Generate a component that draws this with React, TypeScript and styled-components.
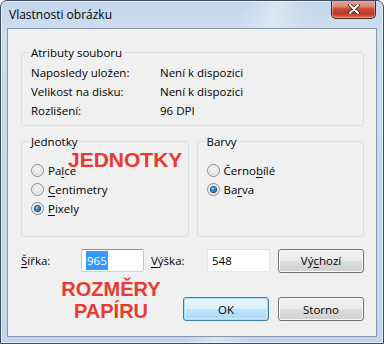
import React from "react";
import styled, { createGlobalStyle, css } from "styled-components";

const Global = createGlobalStyle`
  html, body { margin: 0; padding: 0; }
  body { background: #ffffff; font-family: "Open Sans", "Noto Sans", sans-serif; }
  * { box-sizing: border-box; }
`;

const UI_FONT = `"Open Sans", "Noto Sans", sans-serif`;

const Window = styled.div`
  width: 384px;
  height: 344px;
  border: 1px solid #3f4d5c;
  border-radius: 7px 7px 0 0;
  background:
    linear-gradient(100deg, rgba(255,255,255,0) 55%, rgba(255,255,255,0.35) 62%, rgba(255,255,255,0) 70%),
    linear-gradient(180deg, #c3d6ec 0%, #cfdff1 10%, #c6d9ee 30%, #c2d5eb 100%);
  box-shadow: inset 0 0 0 1px rgba(255,255,255,0.55);
  display: flex;
  flex-direction: column;
  overflow: hidden;
  font-family: ${UI_FONT};
  font-size: 11.5px;
  color: #000;
`;

const TitleBar = styled.div`
  height: 27px;
  display: flex;
  align-items: flex-start;
  justify-content: space-between;
  padding-left: 8px;
  padding-right: 7px;
`;

const Title = styled.div`
  line-height: 28px;
  font-size: 12px;
  color: #000;
`;

const CloseButton = styled.button`
  width: 45px;
  height: 19px;
  margin-top: -1px;
  padding: 0;
  border: 1px solid #4a2620;
  border-top: none;
  border-radius: 0 0 5px 5px;
  background: linear-gradient(180deg, #e7a898 0%, #dd8a78 35%, #c64a35 50%, #c0392a 75%, #d8694c 100%);
  box-shadow: inset 0 0 0 1px rgba(255, 210, 200, 0.45);
  display: flex;
  align-items: center;
  justify-content: center;
`;

const Body = styled.div`
  flex: 1;
  display: flex;
  padding: 0 7px 6px 6px;
`;

const Client = styled.div`
  flex: 1;
  position: relative;
  border: 1px solid #8496aa;
  background: #f0f0f0;
  padding: 16px 12px 0 13px;
  display: flex;
  flex-direction: column;
`;

const Group = styled.fieldset<{ $h: number; $grow?: boolean }>`
  margin: 0;
  height: ${(p) => p.$h}px;
  flex: ${(p) => (p.$grow ? "1 1 0" : "none")};
  border: 1px solid #d5dfe5;
  border-radius: 3px;
  padding: 0 9px 0 9px;
  min-width: 0;
`;

const Legend = styled.legend`
  padding: 0 2px;
  margin-left: -2px;
  line-height: 15px;
  font-size: 11.5px;
`;

const InfoGrid = styled.div`
  display: grid;
  grid-template-columns: 129px 1fr;
  grid-auto-rows: 19px;
  align-items: center;
  padding-top: 3px;
`;

const GroupsRow = styled.div`
  display: flex;
  gap: 8px;
  margin-top: 8px;
`;

const RadioList = styled.div`
  display: flex;
  flex-direction: column;
  padding-top: 12px;
`;

const RadioRow = styled.label`
  display: flex;
  align-items: center;
  height: 19px;
  gap: 4px;
`;

const Radio = styled.input.attrs({ type: "radio" })`
  appearance: none;
  margin: 0;
  width: 13px;
  height: 13px;
  border-radius: 50%;
  border: 1px solid #8a8a8a;
  background: radial-gradient(circle at 50% 40%, #f6f6f6 0%, #e6e6e6 45%, #cfcfcf 100%);
  box-shadow: inset 0 0 0 1px #f4f4f4;
  display: grid;
  place-items: center;
  &:checked::after {
    content: "";
    width: 5px;
    height: 5px;
    border-radius: 50%;
    background: radial-gradient(circle at 40% 35%, #8fd0ff 0%, #2d7fbf 45%, #0e3e66 100%);
    box-shadow: 0 0 0 1px #1b4f7c;
  }
`;

const Key = styled.span`
  text-decoration: underline;
  text-underline-offset: 2px;
`;

const SizeRow = styled.div`
  display: flex;
  align-items: center;
  margin-top: 11px;
  height: 25px;
`;

const FieldLabel = styled.label<{ $w: number; $gap?: number }>`
  width: ${(p) => p.$w}px;
  margin-left: ${(p) => p.$gap ?? 0}px;
  flex: none;
`;

const TextBox = styled.div<{ $focused?: boolean }>`
  width: 63px;
  height: 23px;
  flex: none;
  background: #fff;
  border: 1px solid;
  border-radius: 2px;
  display: flex;
  align-items: center;
  padding-left: 4px;
  ${(p) =>
    p.$focused
      ? css`
          border-color: #5d9fd8 #a7cbea #b9d7f0 #a7cbea;
        `
      : css`
          border-color: #d9dde3 #e3e7ec #e8ecf0 #e3e7ec;
        `}
`;

const Selected = styled.span`
  background: #3399ff;
  color: #fff;
  padding: 1px 1px;
  line-height: 17px;
`;

const Button = styled.button<{ $primary?: boolean; $gap?: number }>`
  width: 86px;
  height: 24px;
  flex: none;
  margin-left: ${(p) => p.$gap ?? 0}px;
  font-family: ${UI_FONT};
  font-size: 11.5px;
  color: #000;
  padding: 0;
  border-radius: 3px;
  border: 1px solid #707070;
  background: linear-gradient(180deg, #f2f2f2 0%, #ebebeb 50%, #dddddd 50%, #cfcfcf 100%);
  box-shadow: inset 0 0 0 1px #fcfcfc;
  ${(p) =>
    p.$primary &&
    css`
      border-color: #3c7fb1;
      background: linear-gradient(180deg, #eaf6fd 0%, #d9f0fc 50%, #bee6fd 50%, #a7d9f5 100%);
      box-shadow: inset 0 0 0 1px #a9ddf8, inset 0 0 0 2px rgba(255, 255, 255, 0.35);
    `}
`;

const ButtonRow = styled.div`
  display: flex;
  justify-content: flex-end;
  gap: 9px;
  margin-top: 24px;
`;

const Annotation = styled.div<{ $left: number; $top: number; $w: number; $size: number; $align?: string }>`
  position: absolute;
  left: ${(p) => p.$left}px;
  top: ${(p) => p.$top}px;
  width: ${(p) => p.$w}px;
  font-family: "Liberation Sans", Arial, sans-serif;
  font-weight: bold;
  font-size: ${(p) => p.$size}px;
  line-height: 22px;
  color: #e83a2e;
  text-align: ${(p) => p.$align ?? "center"};
  pointer-events: none;
`;

export default function App() {
  return (
    <>
      <Global />
      <Window>
        <TitleBar>
          <Title>Vlastnosti obrázku</Title>
          <CloseButton aria-label="Zavřít">
            <svg width="12" height="10" viewBox="0 0 12 10">
              <path d="M2 1 L10 9 M10 1 L2 9" stroke="#3a1a14" strokeWidth="3.6" strokeLinecap="round" />
              <path d="M2 1 L10 9 M10 1 L2 9" stroke="#ffffff" strokeWidth="2" strokeLinecap="round" />
            </svg>
          </CloseButton>
        </TitleBar>
        <Body>
          <Client>
            <Group $h={81}>
              <Legend>Atributy souboru</Legend>
              <InfoGrid>
                <span>Naposledy uložen:</span>
                <span>Není k dispozici</span>
                <span>Velikost na disku:</span>
                <span>Není k dispozici</span>
                <span>Rozlišení:</span>
                <span>96 DPI</span>
              </InfoGrid>
            </Group>
            <GroupsRow>
              <Group $h={103} $grow>
                <Legend>Jednotky</Legend>
                <RadioList>
                  <RadioRow>
                    <Radio name="units" />
                    <span>
                      Pa<Key>l</Key>ce
                    </span>
                  </RadioRow>
                  <RadioRow>
                    <Radio name="units" />
                    <span>
                      <Key>C</Key>entimetry
                    </span>
                  </RadioRow>
                  <RadioRow>
                    <Radio name="units" defaultChecked />
                    <span>
                      <Key>P</Key>ixely
                    </span>
                  </RadioRow>
                </RadioList>
              </Group>
              <Group $h={103} $grow>
                <Legend>Barvy</Legend>
                <RadioList>
                  <RadioRow>
                    <Radio name="colors" />
                    <span>
                      Černo<Key>b</Key>ílé
                    </span>
                  </RadioRow>
                  <RadioRow>
                    <Radio name="colors" defaultChecked />
                    <span>
                      Ba<Key>r</Key>va
                    </span>
                  </RadioRow>
                </RadioList>
              </Group>
            </GroupsRow>
            <SizeRow>
              <FieldLabel $w={60}>
                <Key>Š</Key>ířka:
              </FieldLabel>
              <TextBox $focused>
                <Selected>965</Selected>
              </TextBox>
              <FieldLabel $w={56} $gap={7}>
                <Key>V</Key>ýška:
              </FieldLabel>
              <TextBox>548</TextBox>
              <Button $gap={8}>
                Vý<Key>c</Key>hozí
              </Button>
            </SizeRow>
            <ButtonRow>
              <Button $primary>OK</Button>
              <Button>Storno</Button>
            </ButtonRow>
            <Annotation $left={60} $top={120} $w={130} $size={21} $align="left">
              JEDNOTKY
            </Annotation>
            <Annotation $left={43} $top={249} $w={120} $size={20}>
              ROZMĚRY
              <br />
              PAPÍRU
            </Annotation>
          </Client>
        </Body>
      </Window>
    </>
  );
}
